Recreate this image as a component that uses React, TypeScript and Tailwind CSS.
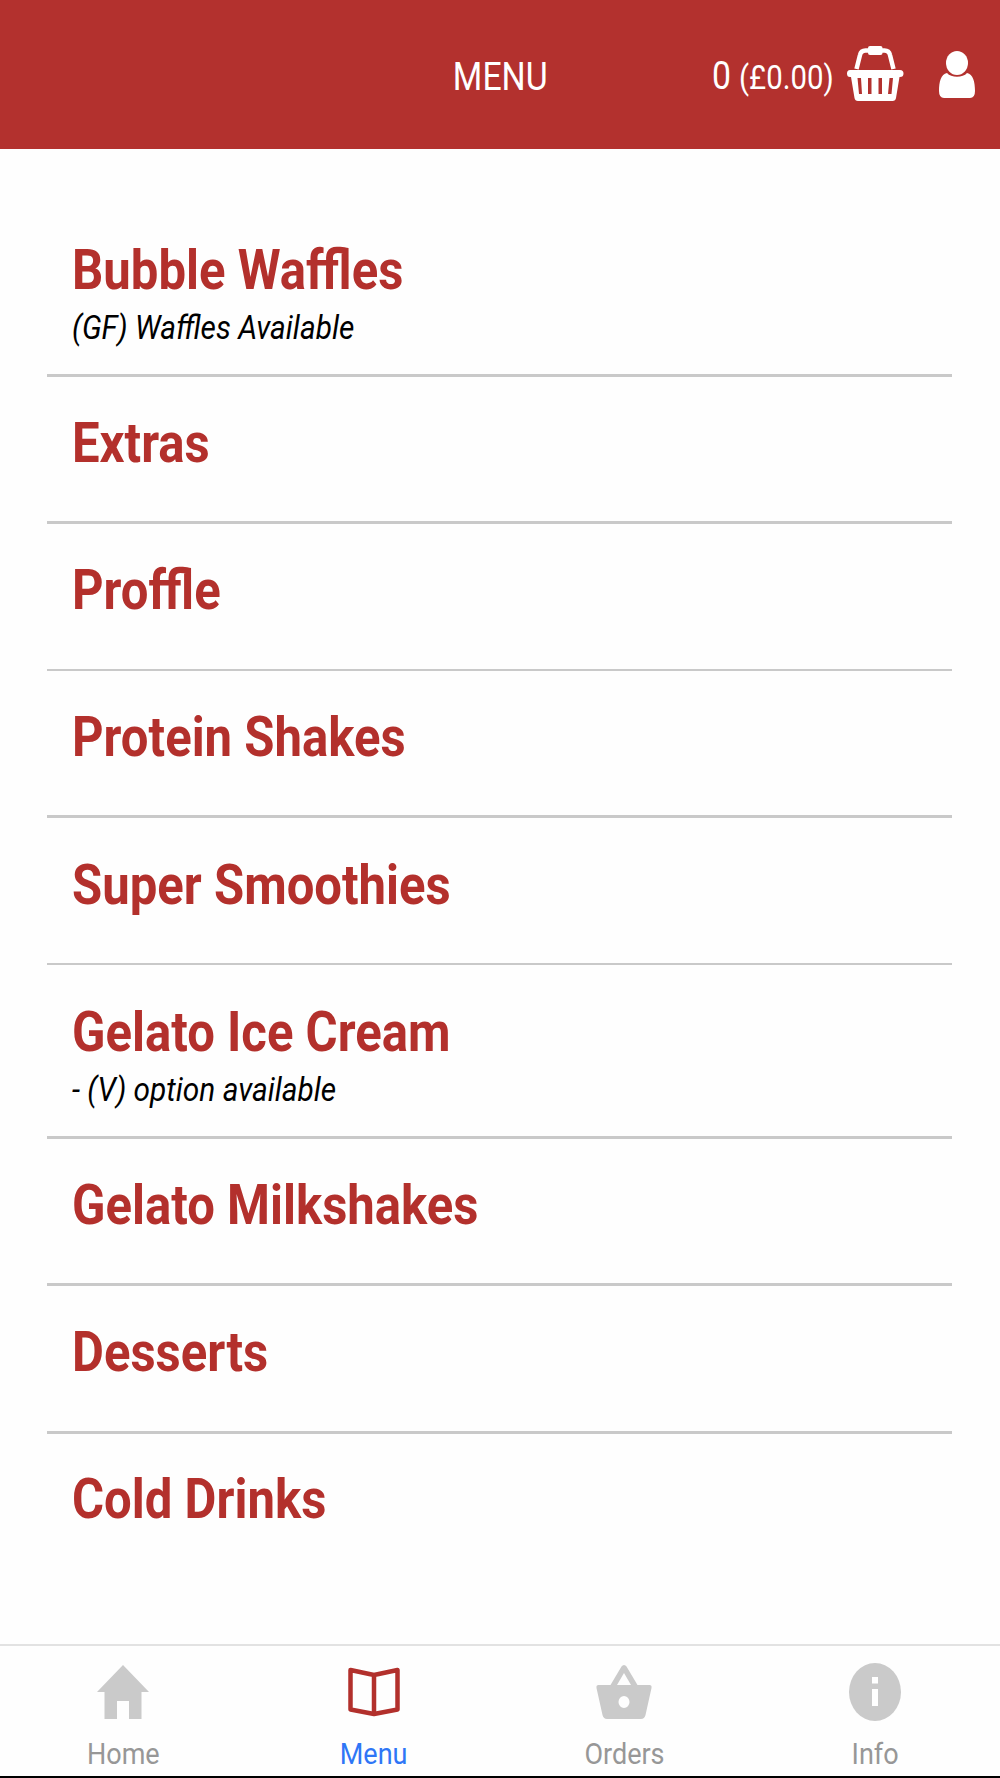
import React from "react";

const categories = [
  { name: "Bubble Waffles", note: "(GF) Waffles Available", size: "h-[173px] pt-[34px] border-b-3" },
  { name: "Extras", size: "h-[147px] pt-[34px] border-b-3" },
  { name: "Proffle", size: "h-[147px] pt-[34px] border-b-2" },
  { name: "Protein Shakes", size: "h-[147px] pt-[34px] border-b-3" },
  { name: "Super Smoothies", size: "h-[147px] pt-[35px] border-b-2" },
  { name: "Gelato Ice Cream", note: "- (V) option available", size: "h-[174px] pt-[35px] border-b-3" },
  { name: "Gelato Milkshakes", size: "h-[147px] pt-[34px] border-b-3" },
  { name: "Desserts", size: "h-[148px] pt-[34px] border-b-3" },
  { name: "Cold Drinks", size: "h-[147px] pt-[33px]" },
];

const BasketIcon = () => (
  <svg className="w-[58px] h-[57px]" viewBox="-1 0 58 57" fill="#fff">
    <path d="M9.500 23 L13 9 Q14 4.500 18.500 4.500 H37.500 Q42 4.500 43 9 L46.500 23" fill="none" stroke="#fff" strokeWidth="4.500" />
    <rect x="21" y="0" width="14.500" height="9" rx="2" />
    <path
      fillRule="evenodd"
      d="M3 24 H53 Q56.500 24 56.500 27.500 Q56.500 31 53 31 H52.500 L49 52 Q48.500 55 45.500 55 H11 Q8 55 7.500 52 L4 31 H3 Q0 31 0 27.500 Q0 24 3 24 Z M10.500 32 L12 48 H15 L14 32 Z M21 32 V48 H24.500 V32 Z M31.500 32 V48 H35 V32 Z M42.500 32 L41 48 H44.500 L46 32 Z"
    />
  </svg>
);

const UserIcon = () => (
  <svg className="w-[36px] h-[48px]" viewBox="0 0 36 48" fill="#fff">
    <ellipse cx="18" cy="12" rx="11" ry="12" />
    <path d="M8 22 C12 27 24 27 28 22 C34 23 36 31 36 40 Q36 47 31 47 H5 Q0 47 0 40 C0 31 2 23 8 22 Z" />
  </svg>
);

const HomeIcon = () => (
  <svg className="w-[52px] h-[54px]" viewBox="0 0 52 54" fill="#cacaca">
    <path d="M26 0 L52 27 H44.500 V54 H32 V36 H20 V54 H7.500 V27 H0 Z" />
  </svg>
);

const BookIcon = () => (
  <svg className="w-[52px] h-[50px]" viewBox="0 0 52 50" fill="none" stroke="#b2302c" strokeWidth="4.500" strokeLinejoin="round">
    <path d="M2.500 3 L26 8 L49.500 3 V42.500 L26 47 L2.500 42.500 Z M26 8 V47" />
  </svg>
);

const OrdersIcon = () => (
  <svg className="w-[56px] h-[54px]" viewBox="0 0 56 54" fill="#cacaca">
    <path
      fillRule="evenodd"
      d="M28 0 Q29.500 0 30.500 1.500 L41.500 20 H53.500 Q56 20 55.500 23 L49.500 50 Q48.500 54 45 54 H11 Q7.500 54 6.500 50 L0.500 23 Q0 20 2.500 20 H14.500 L25.500 1.500 Q26.500 0 28 0 Z M28 8 L21 20 H35 Z M28 31 A5.500 6 0 1 0 28 43 A5.500 6 0 1 0 28 31 Z"
    />
  </svg>
);

const InfoIcon = () => (
  <svg className="w-[52px] h-[58px]" viewBox="0 0 52 58">
    <ellipse cx="26" cy="29" rx="26" ry="29" fill="#cacaca" />
    <path d="M23 14 H29 V20.500 H23 Z M23 26 H29 V43 H23 Z" fill="#fff" />
  </svg>
);

const tabs = [
  { label: "Home", icon: <HomeIcon />, color: "text-[#979797]" },
  { label: "Menu", icon: <BookIcon />, color: "text-[#2f76f6]" },
  { label: "Orders", icon: <OrdersIcon />, color: "text-[#979797]" },
  { label: "Info", icon: <InfoIcon />, color: "text-[#979797]" },
];

const App = () => {
  return (
    <div className="flex flex-col w-[1000px] h-[1778px] overflow-hidden bg-[#fefefe] font-[Roboto,sans-serif]">
      {/* Header */}
      <header className="grid grid-cols-[1fr_auto_1fr] h-[149px] shrink-0 items-center bg-[#b3312e] text-white">
        <div />
        <h1 className="text-[38px] leading-[44px] scale-x-[0.89] mt-[4px]">MENU</h1>
        <div className="flex items-center justify-end pr-[25px]">
          <div className="flex items-baseline gap-[9px] origin-right scale-x-[0.89] mt-[5px] mr-[12px]">
            <span className="text-[38px] leading-[44px]">0</span>
            <span className="text-[33px] leading-[44px]">(£0.00)</span>
          </div>
          <BasketIcon />
          <div className="ml-[35px] mt-px">
            <UserIcon />
          </div>
        </div>
      </header>

      {/* Categories */}
      <main className="flex-1 pt-[55px] pl-[47px] pr-[48px]">
        {categories.map((category) => (
          <div key={category.name} className={`pl-[25px] border-[#c9c9c9] ${category.size}`}>
            <h2 className="w-max origin-left scale-x-[0.892] text-[55px] leading-[64px] font-bold text-[#b3302c]">{category.name}</h2>
            {category.note && (
              <p className="w-max origin-left scale-x-[0.877] mt-[5px] text-[34px] leading-[40px] italic text-black">{category.note}</p>
            )}
          </div>
        ))}
      </main>

      {/* Bottom tabs */}
      <nav className="grid grid-cols-4 w-[1002px] h-[134px] -ml-[2px] shrink-0 border-t-2 border-t-[#e2e2e2] border-b-2 border-b-black">
        {tabs.map((tab) => (
          <div key={tab.label} className="flex flex-col items-center">
            <div className="flex h-[92px] items-center">{tab.icon}</div>
            <span className={`-mt-[2px] text-[30px] leading-[36px] scale-x-[0.9] ${tab.color}`}>{tab.label}</span>
          </div>
        ))}
      </nav>
    </div>
  );
};

export default App;
